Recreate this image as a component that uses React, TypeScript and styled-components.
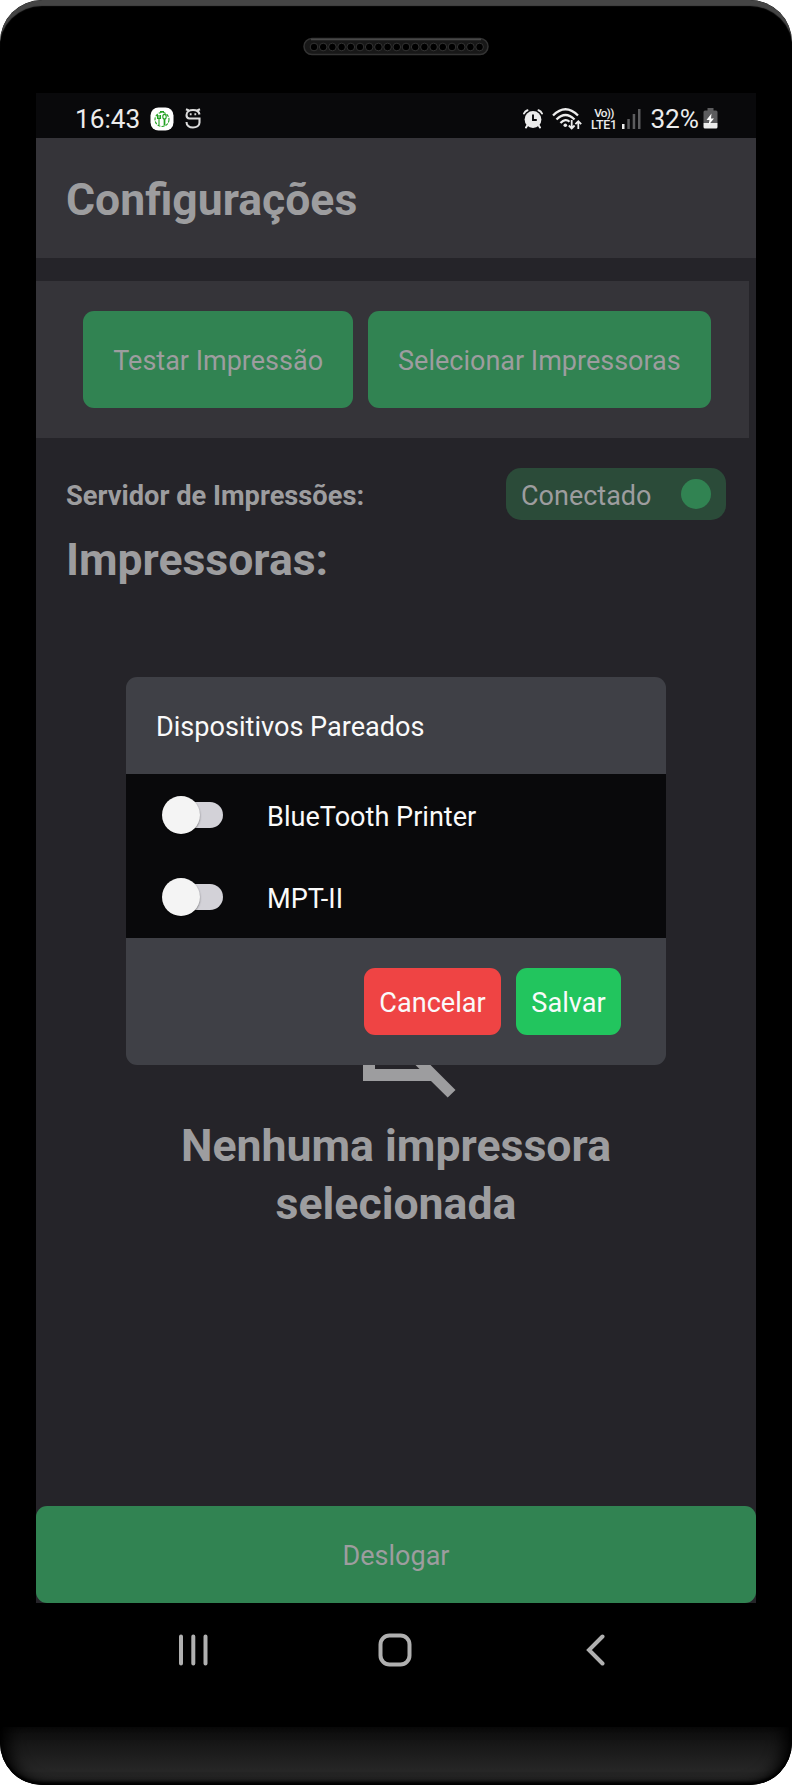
import React from "react";
import styled, { createGlobalStyle } from "styled-components";

const GlobalStyle = createGlobalStyle`
  * { box-sizing: border-box; }
  body { margin: 0; background: #fff; }
`;

const Phone = styled.div`
  width: 792px;
  height: 1785px;
  border-radius: 42px;
  overflow: hidden;
  background: #000;
  display: flex;
  flex-direction: column;
  font-family: Roboto, sans-serif;
  font-size: 27.1px;
  line-height: 37.5px;
`;

const Bezel = styled.div`
  height: 93px;
  flex: none;
  display: flex;
  justify-content: center;
  padding: 37px 0 0 0;
  border-radius: 42px 42px 0 0;
  box-shadow: inset 0 7px 1px -1px #454545;
`;

const Chin = styled.div`
  height: 58px;
  flex: none;
  margin-top: auto;
  border-radius: 0 0 42px 42px;
  background: linear-gradient(#0d0d0d, #262626 75%, #222 100%);
  box-shadow: inset 0 -3px 3px #000, inset 14px 0 16px -6px #000, inset -14px 0 16px -6px #000;
`;

const Screen = styled.div`
  position: relative;
  width: 720px;
  margin: 0 auto;
  flex: none;
  display: flex;
  flex-direction: column;
`;

const StatusBar = styled.div`
  height: 45px;
  padding: 6px 38px 0 39px;
  background: #09090b;
  color: #ececec;
  display: flex;
  align-items: center;
  justify-content: space-between;
`;

const StatusGroup = styled.div`
  display: flex;
  align-items: center;
`;

const StatusIcon = styled.svg<{ $gap?: number }>`
  display: block;
  margin-left: ${(p) => p.$gap ?? 0}px;
`;

const StatusText = styled.span<{ $gap?: number }>`
  font-size: 26.2px;
  line-height: 30px;
  margin-left: ${(p) => p.$gap ?? 0}px;
`;

const Carrier = styled.div`
  width: 27px;
  margin-left: 7px;
  display: flex;
  flex-direction: column;
  align-items: center;
  font-weight: 500;
  white-space: nowrap;
`;

const CarrierLine = styled.span<{ $size: number; $tracking: number }>`
  font-size: ${(p) => p.$size}px;
  line-height: 11px;
  letter-spacing: ${(p) => p.$tracking}px;
`;

const AppBody = styled.div`
  height: 1465px;
  background: #252429;
  color: #9d9d9f;
  display: flex;
  flex-direction: column;
`;

const Header = styled.header`
  height: 120px;
  padding: 3px 30px 0;
  background: #353439;
  display: flex;
  align-items: center;
`;

const Title = styled.h1`
  margin: 0;
  font-size: 44.5px;
  line-height: 60px;
  font-weight: 700;
`;

const Actions = styled.div`
  width: 713px;
  height: 157px;
  margin-top: 23px;
  padding-left: 9px;
  background: #353439;
  display: flex;
  align-items: center;
  justify-content: center;
  gap: 15px;
`;

const GreenButton = styled.button`
  height: 97px;
  padding: 4px 30px 0;
  border: 0;
  border-radius: 11px;
  background: #318352;
  color: #9d9d9f;
  font: inherit;
  font-size: 27px;
  white-space: nowrap;
`;

const ServerRow = styled.div`
  margin-top: 30px;
  padding: 0 30px;
  height: 52px;
  display: flex;
  align-items: center;
  justify-content: space-between;
`;

const ServerLabel = styled.span`
  font-size: 27.25px;
  font-weight: 700;
  padding-top: 5px;
`;

const StatusPill = styled.div`
  width: 220px;
  height: 52px;
  padding: 0 15px;
  border-radius: 15px;
  background: #2b4b39;
  display: flex;
  align-items: center;
  justify-content: space-between;
`;

const PillLabel = styled.span`
  font-size: 27px;
  padding-top: 5px;
`;

const Dot = styled.span`
  width: 30px;
  height: 30px;
  border-radius: 50%;
  background: #318352;
`;

const SectionTitle = styled.h2`
  margin: 10px 30px 0;
  font-size: 44.5px;
  line-height: 60px;
  font-weight: 700;
`;

const Empty = styled.div`
  flex: 1;
  display: flex;
  flex-direction: column;
  align-items: center;
  padding-top: 412px;
`;

const EmptyText = styled.p`
  margin: 19px 0 0;
  width: 541px;
  font-size: 44.6px;
  line-height: 58px;
  font-weight: 700;
  text-align: center;
`;

const Modal = styled.div`
  position: absolute;
  left: 90px;
  top: 584px;
  width: 540px;
  border-radius: 11px;
  overflow: hidden;
  background: #3f4046;
  color: #fafafa;
`;

const ModalTitle = styled.div`
  height: 97px;
  padding: 32px 30px 0;
`;

const DeviceList = styled.div`
  background: #09090b;
`;

const Device = styled.div`
  height: 82px;
  padding: 0 36px;
  display: flex;
  align-items: center;
  gap: 44px;
`;

const DeviceName = styled.span`
  padding-top: 6px;
`;

const Switch = styled.div`
  width: 61px;
  height: 38px;
  display: flex;
  align-items: center;
`;

const Thumb = styled.span`
  width: 38px;
  height: 38px;
  flex: none;
  border-radius: 50%;
  background: #f4f4f4;
  box-shadow: 0 1px 2px rgba(0, 0, 0, 0.45);
  z-index: 1;
`;

const Track = styled.span`
  width: 45px;
  height: 26px;
  margin-left: -22px;
  border-radius: 13px;
  background: #d3d2d8;
`;

const ModalFooter = styled.div`
  height: 127px;
  padding: 30px 45px 0;
  display: flex;
  align-items: flex-start;
  justify-content: flex-end;
  gap: 15px;
`;

const ModalButton = styled.button<{ $color: string; $width: number }>`
  width: ${(p) => p.$width}px;
  height: 67px;
  padding: 4px 0 0;
  border: 0;
  border-radius: 11px;
  background: ${(p) => p.$color};
  color: #fafafa;
  font: inherit;
`;

const NavBar = styled.nav`
  height: 94px;
  padding: 0 151px 0 142px;
  display: flex;
  align-items: center;
`;

const NavIcon = styled.svg<{ $gap?: number }>`
  display: block;
  margin-left: ${(p) => p.$gap ?? 0}px;
`;

const HOLES = Array.from({ length: 19 }, (_, i) => 11 + i * 9.2);

const Speaker = () => (
  <svg width="186" height="19" viewBox="0 0 186 19">
    <rect x="1" y="1.5" width="184" height="16" rx="8" fill="#181818" stroke="#333" strokeWidth="1.5" />
    <path d="M8 2.5H178" stroke="#484848" strokeWidth="1.5" />
    {HOLES.map((x) => (
      <circle key={x} cx={x} cy="10" r="3.8" fill="#000" stroke="#3c3c3c" strokeWidth=".8" />
    ))}
  </svg>
);

const FoodBadge = () => (
  <StatusIcon $gap={10} width="24" height="24" viewBox="0 0 24 24">
    <rect x=".5" y=".5" width="23" height="23" rx="8" fill="#fff" />
    <g fill="none" stroke="#22a122" strokeWidth="1.1">
      <circle cx="12" cy="12.5" r="7" strokeDasharray="3 1.2" />
      <path d="M10 4.7h4" strokeWidth="1.5" />
      <path d="M7.5 8v3.5h3V8M9 8v10" />
      <path d="M14.5 12v6.5" strokeWidth="1.7" />
      <ellipse cx="14.5" cy="9.7" rx="1.7" ry="2.3" />
    </g>
  </StatusIcon>
);

const GhostIcon = () => (
  <StatusIcon $gap={11} width="16" height="21" viewBox="0 0 16 21" fill="none" stroke="#dcdcdc" strokeWidth="2.1">
    <path d="M1 1.2L3.8 2.5M15 1.2L12.200 2.5M14.500 6.500C14 3 11 2 8 2S1.500 3.500 1.500 7C1.500 9.300 2.500 10.500 4.500 10.500H14.500V14.500C14.500 17.800 11.500 19.500 8 19.500S1.500 17.800 1.500 14" />
    <path d="M4.800 6.2h1.800M9.400 6.2h1.800" strokeWidth="2" />
  </StatusIcon>
);

const AlarmIcon = () => (
  <StatusIcon width="20" height="20" viewBox="0 0 20 20">
    <g stroke="#ececec" strokeWidth="2" strokeLinecap="round" fill="none">
      <path d="M1 4.500Q2 2 4.500 1.200M19 4.500Q18 2 15.500 1.200M4.500 16L3 18.500M15.500 16L17 18.500" />
    </g>
    <circle cx="10" cy="10.5" r="8.4" fill="#ececec" />
    <path d="M10 5.500V11H13.800" stroke="#09090b" strokeWidth="1.9" fill="none" />
  </StatusIcon>
);

const WifiIcon = () => (
  <StatusIcon $gap={9} width="31" height="22" viewBox="0 0 31 22" fill="none" stroke="#ececec" strokeWidth="2.3">
    <path d="M1 7.500Q13.500 -5 26 7.500" />
    <path d="M4.500 11.500Q13.500 2.500 22.500 11.500" />
    <path d="M8.500 15Q13.500 9.800 17.500 13.700" />
    <circle cx="13.3" cy="17.3" r="1.8" fill="#ececec" stroke="none" />
    <path d="M19.700 12V20M16.800 17.500L19.700 20.500L22.600 17.500M26.300 21V13.500M23.400 16.200L26.300 13.200L29.200 16.200" strokeWidth="1.8" />
  </StatusIcon>
);

const SignalIcon = () => (
  <StatusIcon $gap={5} width="19" height="20" viewBox="0 0 19 20">
    <rect x="0" y="15" width="2.5" height="5" fill="#ececec" />
    <g fill="#5c5c5e">
      <rect x="5.3" y="10" width="2.5" height="10" />
      <rect x="10.7" y="5" width="2.5" height="15" />
      <rect x="16" y="0" width="2.5" height="20" />
    </g>
  </StatusIcon>
);

const BatteryIcon = () => (
  <StatusIcon $gap={4} width="15" height="21" viewBox="0 0 15 21">
    <path d="M4.500 0h6v2.500H13a1.500 1.500 0 0 1 1.500 1.500V15H.5V4A1.500 1.500 0 0 1 2 2.500h2.500z" fill="#5c5c5e" />
    <path d="M.5 15h14v4a1.500 1.500 0 0 1-1.500 1.500H2A1.500 1.500 0 0 1 .5 19z" fill="#ececec" />
    <path d="M8.500 5.500L3.500 12H6.500L5.500 17L11 10.500H8z" fill="#fff" />
  </StatusIcon>
);

const NoPrinterIcon = () => (
  <svg width="119" height="96" viewBox="0 0 119 96" fill="#9d9d9f">
    <path fillRule="evenodd" d="M26 7V79H94L110.700 95.500L118.500 88L37.500 7ZM38 22.500V67H82.500Z" />
  </svg>
);

const devices = ["BlueTooth Printer", "MPT-II"];

export default function App() {
  return (
    <>
      <GlobalStyle />
      <Phone>
        <Bezel>
          <Speaker />
        </Bezel>
        <Screen>
          <StatusBar>
            <StatusGroup>
              <StatusText>16:43</StatusText>
              <FoodBadge />
              <GhostIcon />
            </StatusGroup>
            <StatusGroup>
              <AlarmIcon />
              <WifiIcon />
              <Carrier>
                <CarrierLine $size={11.8} $tracking={-0.7}>Vo))</CarrierLine>
                <CarrierLine $size={12.4} $tracking={-0.3}>LTE1</CarrierLine>
              </Carrier>
              <SignalIcon />
              <StatusText $gap={9}>32%</StatusText>
              <BatteryIcon />
            </StatusGroup>
          </StatusBar>
          <AppBody>
            <Header>
              <Title>Configurações</Title>
            </Header>
            <Actions>
              <GreenButton>Testar Impressão</GreenButton>
              <GreenButton>Selecionar Impressoras</GreenButton>
            </Actions>
            <ServerRow>
              <ServerLabel>Servidor de Impressões:</ServerLabel>
              <StatusPill>
                <PillLabel>Conectado</PillLabel>
                <Dot />
              </StatusPill>
            </ServerRow>
            <SectionTitle>Impressoras:</SectionTitle>
            <Empty>
              <NoPrinterIcon />
              <EmptyText>Nenhuma impressora selecionada</EmptyText>
            </Empty>
            <GreenButton>Deslogar</GreenButton>
          </AppBody>
          <Modal>
            <ModalTitle>Dispositivos Pareados</ModalTitle>
            <DeviceList>
              {devices.map((name) => (
                <Device key={name}>
                  <Switch>
                    <Thumb />
                    <Track />
                  </Switch>
                  <DeviceName>{name}</DeviceName>
                </Device>
              ))}
            </DeviceList>
            <ModalFooter>
              <ModalButton $color="#ef4444" $width={137}>Cancelar</ModalButton>
              <ModalButton $color="#22c55e" $width={105}>Salvar</ModalButton>
            </ModalFooter>
          </Modal>
          <NavBar>
            <NavIcon width="30" height="32" viewBox="0 0 30 32" stroke="#b0b0b0" strokeWidth="4" strokeLinecap="round">
              <path d="M3 2.500V29.500M15.300 2.500V29.500M27.500 2.500V29.500" />
            </NavIcon>
            <NavIcon $gap={170} width="34" height="34" viewBox="0 0 34 34" fill="none" stroke="#b0b0b0" strokeWidth="4">
              <rect x="2.5" y="2.5" width="29" height="29" rx="9" />
            </NavIcon>
            <NavIcon $gap={174} width="19" height="32" viewBox="0 0 19 32" fill="none" stroke="#b0b0b0" strokeWidth="4" strokeLinecap="round">
              <path d="M16.500 2.500L3 16L16.500 29.500" />
            </NavIcon>
          </NavBar>
        </Screen>
        <Chin />
      </Phone>
    </>
  );
}
